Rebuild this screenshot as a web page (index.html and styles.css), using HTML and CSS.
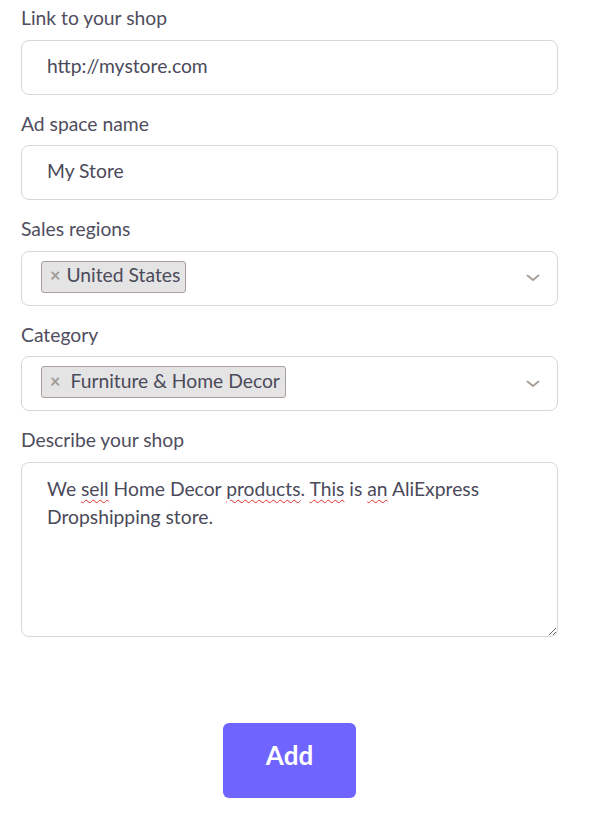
FILE: index.html
```html
<!DOCTYPE html>
<html lang="en">
<head>
<meta charset="utf-8">
<title>Add ad space</title>
<link rel="stylesheet" href="styles.css">
</head>
<body>
<form class="form">
  <div class="field">
    <label class="label">Link to your shop</label>
    <input class="input" type="text" value="http://mystore.com">
  </div>
  <div class="field">
    <label class="label">Ad space name</label>
    <input class="input" type="text" value="My Store">
  </div>
  <div class="field">
    <label class="label">Sales regions</label>
    <div class="select">
      <span class="chip"><span class="chip-x">×</span><span class="chip-text">United States</span></span>
      <svg class="chevron" width="14" height="8" viewBox="0 0 14 8"><path d="M1.5 1.5 L7 6 L12.5 1.5" fill="none" stroke="#a79d95" stroke-width="1.8" stroke-linecap="round" stroke-linejoin="round"/></svg>
    </div>
  </div>
  <div class="field">
    <label class="label">Category</label>
    <div class="select">
      <span class="chip"><span class="chip-x">×</span><span class="chip-text chip-text-wide">Furniture &amp; Home Decor</span></span>
      <svg class="chevron" width="14" height="8" viewBox="0 0 14 8"><path d="M1.5 1.5 L7 6 L12.5 1.5" fill="none" stroke="#a79d95" stroke-width="1.8" stroke-linecap="round" stroke-linejoin="round"/></svg>
    </div>
  </div>
  <div class="field">
    <label class="label">Describe your shop</label>
    <div class="textarea">We <span class="typo">sell</span> Home Decor <span class="typo">products</span>. <span class="typo">This</span> is <span class="typo">an</span> AliExpress Dropshipping store.</div>
  </div>
  <div class="actions">
    <button class="btn" type="button">Add</button>
  </div>
</form>
</body>
</html>
```
FILE: styles.css
```css
* { box-sizing: border-box; }
html, body { margin: 0; padding: 0; background: #ffffff; }
body {
  font-family: Lato, "Open Sans", sans-serif;
  color: #4b4a5a;
}
.form {
  width: 558px;
  padding: 6px 0 0 21px;
}
.field {
  margin-bottom: 17px;
}
.label {
  display: block;
  font-size: 19.3px;
  line-height: 22.5px;
  padding-top: 1px;
  margin-bottom: 10px;
  color: #4f4d5e;
}
.input {
  display: block;
  width: 537px;
  height: 55px;
  border: 1px solid #d7d6de;
  border-radius: 8px;
  padding: 13px 26px 17px 25px;
  font-family: Lato, "Open Sans", sans-serif;
  font-size: 19.3px;
  color: #4b4a5a;
  background: #fff;
  outline: none;
}
.select {
  display: flex;
  align-items: flex-start;
  width: 537px;
  height: 55px;
  border: 1px solid #d7d6de;
  border-radius: 8px;
  padding: 9px 17px 0 19px;
}
.chip {
  display: inline-flex;
  align-items: center;
  height: 32px;
  padding: 0 5px 3px 8px;
  background: #e4e4e4;
  border: 1px solid #aa9f98;
  border-radius: 3px;
  font-size: 19.3px;
  line-height: 22px;
  color: #4b4a5a;
}
.chip-x {
  color: #a09a96;
  font-weight: bold;
  font-size: 18px;
  margin-right: 6px;
}
.chip-text-wide {
  margin-left: 4px;
}
.chevron {
  margin-left: auto;
  align-self: center;
  margin-top: -9px;
  margin-right: 0;
}
.textarea {
  width: 537px;
  height: 175px;
  border: 1px solid #d7d6de;
  border-radius: 8px;
  padding: 12px 60px 0 25px;
  font-size: 19.3px;
  line-height: 28px;
  color: #4b4a5a;
  resize: vertical;
  overflow: auto;
}
.typo {
  text-decoration: underline wavy #e2302e;
  text-decoration-thickness: 1px;
  text-underline-offset: 3px;
}
.actions {
  display: flex;
  justify-content: center;
  width: 537px;
  margin-top: 86px;
}
.btn {
  width: 133px;
  height: 75px;
  border: none;
  border-radius: 6px;
  background: #7064ff;
  color: #ffffff;
  font-family: Lato, "Open Sans", sans-serif;
  font-weight: bold;
  font-size: 26px;
  line-height: 30px;
  padding: 0 0 11px 0;
}
```
